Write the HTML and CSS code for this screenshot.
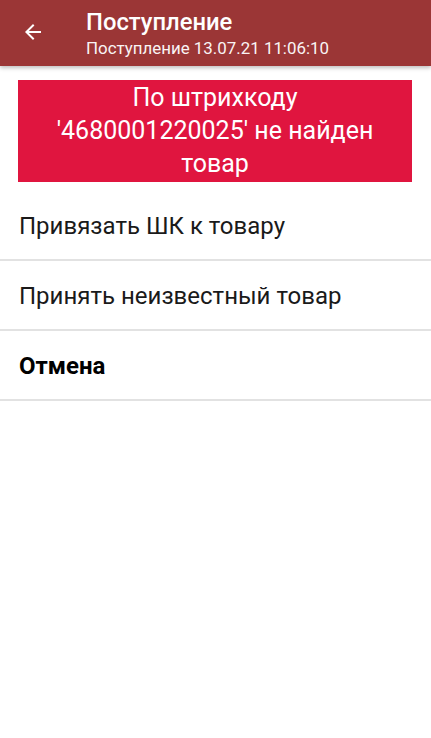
FILE: index.html
```html
<!DOCTYPE html>
<html>
<head>
  <meta charset="utf-8">
  <title>Поступление</title>
  <link rel="stylesheet" href="styles.css">
</head>
<body>
  <div class="toolbar">
    <button class="back" type="button">
      <svg width="24" height="24" viewBox="0 0 24 24"><path d="M20 11H7.83l5.59-5.59L12 4l-8 8 8 8 1.41-1.41L7.83 13H20v-2z" fill="#fff"/></svg>
    </button>
    <div class="titles">
      <div class="title">Поступление</div>
      <div class="subtitle">Поступление 13.07.21 11:06:10</div>
    </div>
  </div>

  <div class="alert">По штрихкоду '4680001220025' не найден товар</div>

  <ul class="menu">
    <li>Привязать ШК к товару</li>
    <li>Принять неизвестный товар</li>
    <li class="cancel">Отмена</li>
  </ul>
</body>
</html>
```

FILE: styles.css
```css
body {
  margin: 0;
  font-family: Roboto, "Noto Sans", sans-serif;
  background: #fff;
  color: #1a1a1a;
}

.toolbar {
  height: 66px;
  background: #9b3636;
  display: flex;
  align-items: center;
  box-shadow: 0 2px 4px rgba(0, 0, 0, 0.25);
  position: relative;
}

.back {
  background: none;
  border: 0;
  padding: 0;
  width: 24px;
  height: 24px;
  margin: 0 0 2px 21px;
}

.titles {
  margin-left: 41px;
  color: #fff;
}

.title {
  font-size: 23.8px;
  font-weight: 500;
  line-height: 26px;
}

.subtitle {
  font-size: 16.9px;
  line-height: 20px;
  margin-top: 3px;
  opacity: 0.95;
}

.alert {
  margin: 14px 19px 0 18px;
  background: #e0153f;
  color: #fff;
  font-size: 25px;
  line-height: 33px;
  text-align: center;
  padding: 1px 24px 2px;
}

.menu {
  list-style: none;
  margin: 9px 0 0;
  padding: 0;
}

.menu li {
  height: 68px;
  line-height: 70px;
  padding-left: 19px;
  font-size: 24px;
  border-bottom: 2px solid #e2e2e2;
}

.menu .cancel {
  font-weight: bold;
  color: #000;
}
```
